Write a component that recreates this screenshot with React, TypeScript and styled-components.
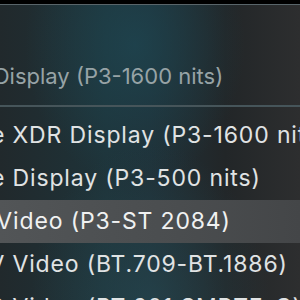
import styled, { createGlobalStyle } from "styled-components";

const GlobalStyle = createGlobalStyle`
  html, body {
    margin: 0;
    padding: 0;
    background: #000;
  }
  #root {
    width: 300px;
    height: 300px;
    overflow: hidden;
  }
`;

const Screen = styled.div`
  width: 300px;
  height: 300px;
  overflow: hidden;
  display: flex;
  flex-direction: column;
  background: #000;
  padding-top: 4px;
  box-sizing: border-box;
  font-family: Inter, "Noto Sans", "Liberation Sans", sans-serif;
`;

const Surface = styled.div`
  flex: 1;
  display: flex;
  flex-direction: column;
  border-top: 1px solid #59656a;
  background:
    radial-gradient(ellipse 120px 160px at 150px 300px, rgba(40, 78, 88, 0.55), transparent),
    radial-gradient(ellipse 110px 140px at 135px 40px, rgba(30, 72, 84, 0.7), transparent),
    linear-gradient(90deg, #21292c 0%, #1e3339 35%, #1f3037 50%, #222628 75%, #2d2e2f 100%);
`;

const Header = styled.div`
  height: 100px;
  box-sizing: border-box;
  padding-top: 50px;
`;

const Divider = styled.div`
  height: 2px;
  background: #46555a;
`;

const Menu = styled.div`
  display: flex;
  flex-direction: column;
  padding-top: 7px;
`;

const Item = styled.div<{ $active?: boolean }>`
  height: 43px;
  line-height: 43px;
  font-size: 23px;
  letter-spacing: 0.85px;
  white-space: nowrap;
  color: ${(p) => (p.$active ? "#f0f1f1" : "#e0e3e4")};
  background: ${(p) =>
    p.$active ? "linear-gradient(90deg, #525557 0%, #4a4d4f 60%, #444648 100%)" : "transparent"};
`;

const Title = styled.div`
  height: 43px;
  line-height: 43px;
  font-size: 22px;
  white-space: nowrap;
  color: #97a3a6;
`;

const Label = styled.span<{ $shift: number }>`
  display: inline-block;
  margin-left: ${(p) => p.$shift}px;
`;

const items = [
  "Apple XDR Display (P3-1600 nits)",
  "Apple Display (P3-500 nits)",
  "HDR Video (P3-ST 2084)",
  "HDTV Video (BT.709-BT.1886)",
  "NTSC Video (BT.601 SMPTE-C)",
];

export default function App() {
  return (
    <>
      <GlobalStyle />
      <Screen>
        <Surface>
          <Header>
            <Title>
              <Label $shift={-124}>Apple XDR Display (P3-1600 nits)</Label>
            </Title>
          </Header>
          <Divider />
          <Menu>
            {items.map((text, i) => (
              <Item key={text} $active={i === 2}>
                <Label $shift={-62}>{text}</Label>
              </Item>
            ))}
          </Menu>
        </Surface>
      </Screen>
    </>
  );
}
